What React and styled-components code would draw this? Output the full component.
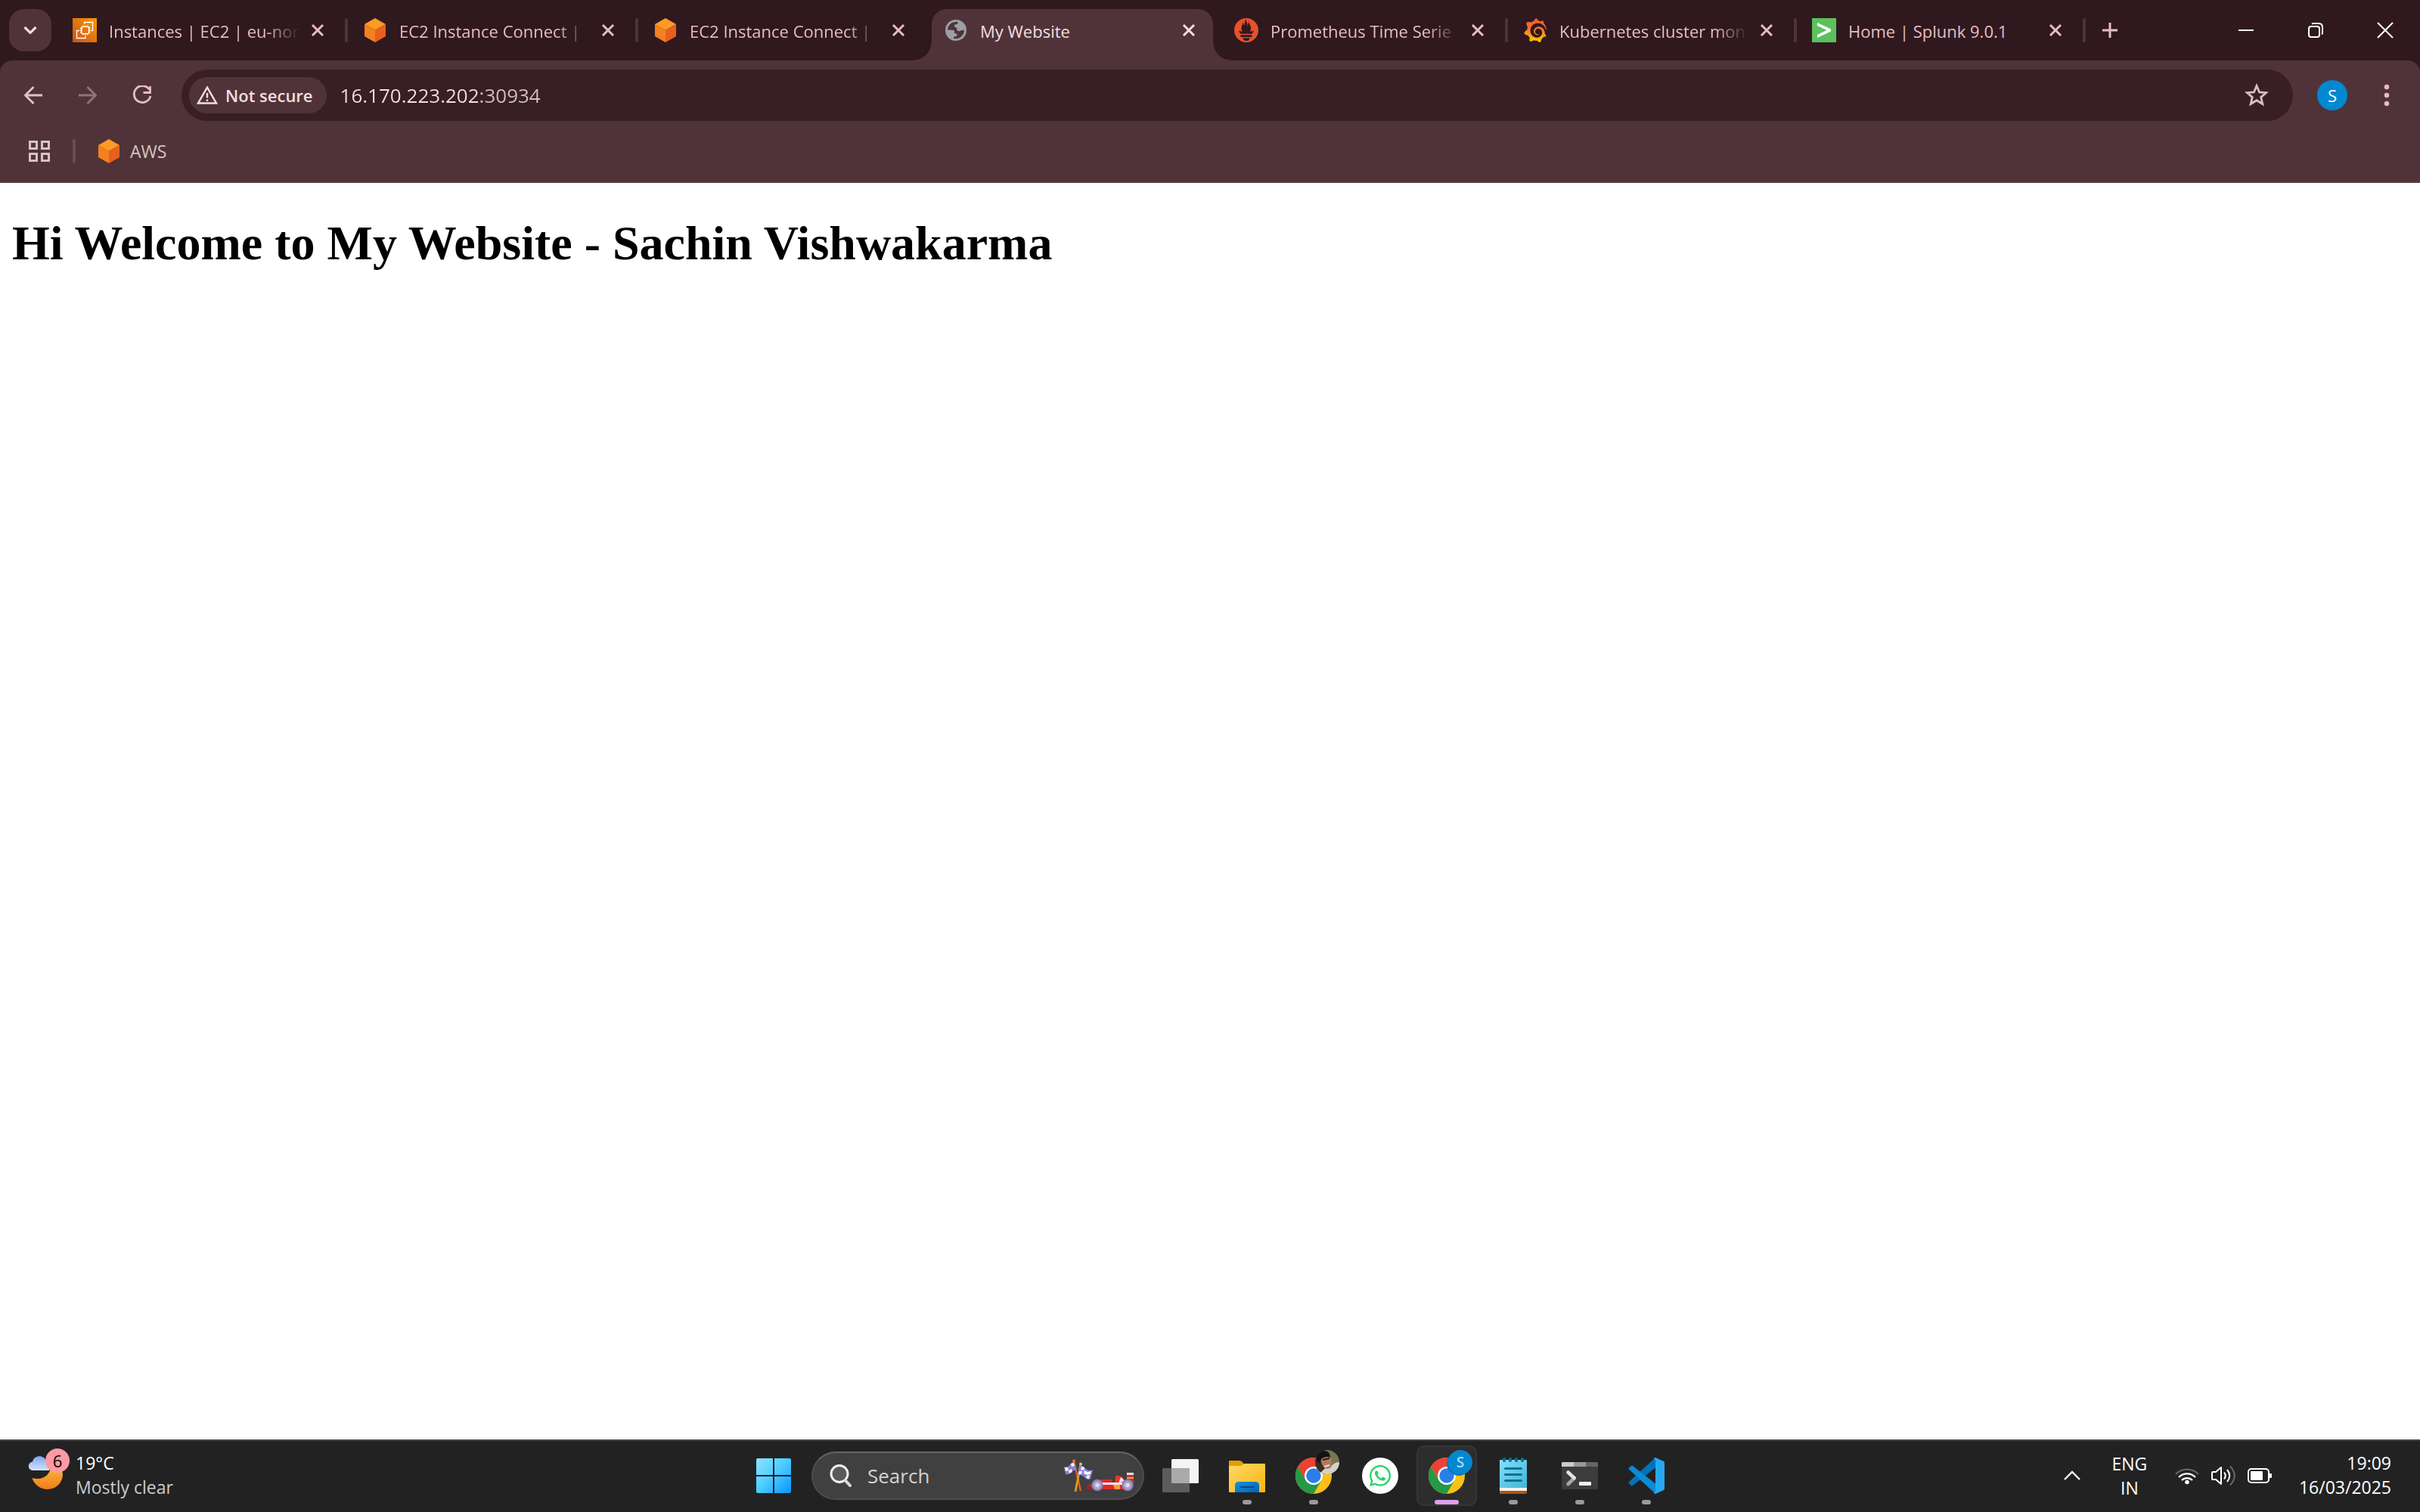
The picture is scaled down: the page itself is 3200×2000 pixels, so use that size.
import React from "react";
import styled, { createGlobalStyle, css } from "styled-components";
import { FaWhatsapp } from "react-icons/fa";
import { SiPrometheus, SiGrafana } from "react-icons/si";

const ui = `"Open Sans", "Noto Sans", sans-serif`;

const c = {
  frame: "#2f191e",
  toolbar: "#503338",
  field: "#381f23",
  pink: "#e7bdc3",
  light: "#f0dfe1",
  dim: "#d4c3c6",
  line: "#544243",
  taskbar: "#222222",
};

const Global = createGlobalStyle`
  *, *::before, *::after { box-sizing: border-box; }
  body { margin: 0; background: #fff; font-family: ${ui}; }
  svg { display: block; flex: none; }
`;

const plain = css`
  border: 0;
  margin: 0;
  padding: 0;
  background: transparent;
  color: inherit;
  font: inherit;
  display: flex;
  align-items: center;
  justify-content: center;
  cursor: pointer;
`;

const Screen = styled.div`
  min-height: 100vh;
  display: flex;
  flex-direction: column;
`;

const Chrome = styled.header`
  background: ${c.frame};
`;

/* ---------- tab strip ---------- */

const Strip = styled.div`
  display: flex;
  align-items: flex-start;
  height: 80px;
  padding: 12px 0 0 12px;
  color: ${c.pink};
`;

const TabSearch = styled.button`
  ${plain}
  flex: none;
  width: 56px;
  height: 56px;
  margin-right: 12px;
  border-radius: 20px;
  background: ${c.toolbar};
  color: ${c.light};
`;

const TabList = styled.div`
  display: flex;
  min-width: 0;
`;

const TabBox = styled.div`
  position: relative;
  flex: 0 1 auto;
  width: ${(p) => p.$size}px;
  min-width: 0;
  height: ${(p) => (p.$active ? 68 : 56)}px;
  padding: 0 12px ${(p) => (p.$active ? 12 : 0)}px 16px;
  display: flex;
  align-items: center;
  border-radius: 20px 20px 0 0;
  background: ${(p) => (p.$active ? c.toolbar : "transparent")};
  color: ${(p) => (p.$active ? c.light : c.pink)};

  ${(p) =>
    p.$active &&
    css`
      &::before,
      &::after {
        content: "";
        position: absolute;
        bottom: 0;
        width: 24px;
        height: 24px;
      }
      &::before {
        right: 100%;
        background: radial-gradient(circle at 0 0, transparent 23px, ${c.toolbar} 24px);
      }
      &::after {
        left: 100%;
        background: radial-gradient(circle at 100% 0, transparent 23px, ${c.toolbar} 24px);
      }
    `}
`;

const TabTitle = styled.button`
  ${plain}
  flex: 1;
  min-width: 0;
  gap: 16px;
  justify-content: flex-start;
  color: inherit;
`;

const TabText = styled.span`
  flex: 1;
  min-width: 0;
  padding-top: 2px;
  overflow: hidden;
  white-space: nowrap;
  text-align: left;
  font-size: 22px;
  line-height: 32px;
  ${(p) =>
    p.$faded &&
    css`
      mask-image: linear-gradient(90deg, #000 calc(100% - 44px), transparent);
    `}
`;

const TabClose = styled.button`
  ${plain}
  flex: none;
  width: 40px;
  height: 40px;
  margin-left: 4px;
`;

const TabGap = styled.span`
  flex: none;
  width: 4px;
  height: 32px;
  margin: 12px 4px;
  border-radius: 2px;
  background: ${(p) => (p.$hidden ? "transparent" : c.toolbar)};
`;

const NewTab = styled.button`
  ${plain}
  flex: none;
  width: 56px;
  height: 56px;
`;

const WindowButtons = styled.div`
  display: flex;
  margin-left: auto;
  color: #fff;
`;

const WindowButton = styled.button`
  ${plain}
  width: 92px;
  height: 56px;
`;

/* ---------- toolbar ---------- */

const Toolbar = styled.div`
  padding-top: 12px;
  border-radius: 16px 16px 0 0;
  border-bottom: 2px solid ${c.line};
  background: ${c.toolbar};
  color: ${c.pink};
`;

const NavRow = styled.div`
  display: flex;
  align-items: center;
  gap: 16px;
  padding: 0 16px;
`;

const IconButton = styled.button`
  ${plain}
  flex: none;
  width: 56px;
  height: 56px;
  opacity: ${(p) => (p.disabled ? 0.45 : 1)};
`;

const AddressBar = styled.div`
  flex: 1;
  display: flex;
  align-items: center;
  height: 68px;
  margin: 0 8px;
  padding: 0 20px 0 10px;
  border-radius: 34px;
  background: ${c.field};
  color: ${c.dim};
`;

const SecurityChip = styled.button`
  ${plain}
  height: 48px;
  padding: 0 18px 0 10px;
  gap: 10px;
  border-radius: 24px;
  background: ${c.toolbar};
  color: ${c.light};
  font-size: 22px;
  font-weight: 600;
  white-space: nowrap;
`;

const UrlInput = styled.input`
  flex: 1;
  min-width: 0;
  height: 48px;
  margin-left: 18px;
  padding: 0;
  border: 0;
  outline: 0;
  color: ${c.light};
  font-family: ${ui};
  font-size: 26px;
  background: linear-gradient(90deg, ${c.light} 184px, #cfc0c2 184px);
  background-clip: text;
  -webkit-text-fill-color: transparent;
`;

const Avatar = styled.span`
  display: grid;
  place-items: center;
  width: 40px;
  height: 40px;
  border-radius: 50%;
  background: #0288d1;
  color: #fff;
  font-size: 22px;
`;

const Bookmarks = styled.nav`
  display: flex;
  align-items: center;
  height: 80px;
  padding: 0 24px;
  color: ${c.dim};
`;

const BookmarkRule = styled.span`
  width: 4px;
  height: 32px;
  margin: 0 28px 0 16px;
  border-radius: 2px;
  background: #6d4b51;
`;

const Bookmark = styled.a`
  display: flex;
  align-items: center;
  gap: 12px;
  color: inherit;
  font-size: 23px;
  line-height: 32px;
  text-decoration: none;
`;

/* ---------- page ---------- */

const Page = styled.main`
  flex: 1;
  padding: 0 16px;
  background: #fff;
  color: #000;
`;

const Heading = styled.h1`
  margin: 43px 0;
  font-family: "Liberation Serif", "Times New Roman", serif;
  font-size: 64px;
  font-weight: 700;
  line-height: 74px;
`;

/* ---------- taskbar ---------- */

const Taskbar = styled.footer`
  display: grid;
  grid-template-columns: 1fr auto 1fr;
  align-items: center;
  height: 96px;
  background: ${c.taskbar};
  box-shadow: inset 0 2px #444;
  color: #fff;
  font-size: 23px;
  line-height: 32px;
`;

const Weather = styled.button`
  ${plain}
  justify-self: start;
  gap: 8px;
  padding-left: 36px;
  text-align: left;
`;

const WeatherIcon = styled.span`
  position: relative;
`;

const Badge = styled.span`
  position: absolute;
  top: 0;
  right: 0;
  display: grid;
  place-items: center;
  width: 32px;
  height: 32px;
  border-radius: 50%;
  background: #ff99a4;
  color: #000;
  font-size: 22px;
`;

const Lines = styled.span`
  display: grid;
  padding-bottom: ${(p) => (p.$raised ? 2 : 0)}px;
`;

const Muted = styled.span`
  color: #ccc;
`;

const Dock = styled.div`
  display: flex;
  align-items: center;
  gap: 8px;
`;

const DockButton = styled.button`
  ${plain}
  position: relative;
  width: 80px;
  height: 80px;
  border-radius: 10px;
  background: ${(p) => (p.$active ? "#2d2d2d" : "transparent")};
  box-shadow: ${(p) => (p.$active ? "inset 0 0 0 2px #363636" : "none")};

  ${(p) =>
    p.$running &&
    css`
      &::after {
        content: "";
        position: absolute;
        bottom: 2px;
        left: 50%;
        width: ${p.$active ? 32 : 12}px;
        height: 6px;
        border-radius: 3px;
        background: ${p.$active ? "#df9fea" : "#9a9a9a"};
        transform: translateX(-50%);
      }
    `}
`;

const SearchBox = styled.label`
  display: flex;
  align-items: center;
  gap: 20px;
  width: 440px;
  height: 64px;
  margin-left: 2px;
  padding: 0 10px 0 22px;
  border: 2px solid #4d4d4d;
  border-top-color: #666;
  border-radius: 32px;
  background: #404040;
`;

const SearchInput = styled.input`
  flex: 1;
  min-width: 0;
  padding: 0;
  border: 0;
  outline: 0;
  background: transparent;
  color: #fff;
  font-family: ${ui};
  font-size: 26px;
  &::placeholder {
    color: #d2d2d2;
    opacity: 1;
  }
`;

const Tray = styled.div`
  display: flex;
  align-items: center;
  justify-self: end;
  gap: 4px;
  padding-right: 22px;
`;

const TrayButton = styled.button`
  ${plain}
  min-width: ${(p) => p.$width}px;
  height: 80px;
  padding: 0 ${(p) => (p.$end ? 16 : 0)}px;
  gap: 16px;
  justify-content: ${(p) => (p.$end ? "flex-end" : "center")};
  text-align: ${(p) => (p.$end ? "right" : "center")};
`;

/* ---------- drawings ---------- */

const Cube = () => (
  <svg width="32" height="32" viewBox="0 0 32 32">
    <path d="M16 0 30 8 16 16 2 8Z" fill="#ff9a27" />
    <path d="M2 8 16 16V32L2 24Z" fill="#f58021" />
    <path d="M30 8 16 16V32L30 24Z" fill="#e85f1e" />
  </svg>
);

const Ec2 = () => (
  <svg width="32" height="32" viewBox="0 0 32 32">
    <defs>
      <linearGradient id="ec2" x1="0" y1="1" x2="1" y2="0">
        <stop offset="0" stopColor="#c8511b" />
        <stop offset="1" stopColor="#ff9900" />
      </linearGradient>
    </defs>
    <rect width="32" height="32" fill="url(#ec2)" />
    <g fill="none" stroke="#fff" strokeWidth="1.3">
      <rect x="12" y="11.500" width="9.500" height="9" />
      <path d="M14 11.500V9.500M16.700 11.500V9.500M19.500 11.500V9.500M14 22.500v-2M16.700 22.500v-2M19.500 22.500v-2M12 13.500h-2M12 16h-2M12 18.500h-2M21.500 13.500h2M21.500 16h2M21.500 18.500h2" />
      <path d="M15.500 8V5.500H26.500V16.500H24.500M9 16.500H5.500V26.500H17V23.500" />
    </g>
  </svg>
);

const Globe = () => (
  <svg width="32" height="32" viewBox="-2 -2 32 32">
    <circle cx="14" cy="14" r="14" fill="#9aa0a6" />
    <path
      d="M3 13.500C3.200 8 7.500 3.300 13 2.900Q16 2.700 16.500 3.200V5.200Q16 6.300 13.500 6.300Q12 6.500 12 8V9.500Q14.800 9.800 15.300 11.500V13.500Q16.500 15.800 18.800 15.200Q21 13.500 25 13.800C25 19 21 25 13.500 25.200Q11.300 25.200 11 24.600V22.600H13.200Q15.300 22.300 15.500 20V18.500H13.200Q12 18.300 12 16.500V14.800Q11.500 13.700 9.500 13.700Z"
      fill={c.toolbar}
    />
  </svg>
);

const Prometheus = () => <SiPrometheus size={32} color="#e6522c" />;

const GradientHolder = styled.svg`
  position: absolute;
`;

const Grafana = () => (
  <>
    <GradientHolder width="0" height="0">
      <defs>
        <linearGradient id="grafana" x1="0" y1="0" x2="0" y2="1">
          <stop offset="0" stopColor="#f05a28" />
          <stop offset="0.4" stopColor="#f4722b" />
          <stop offset="1" stopColor="#fbca0a" />
        </linearGradient>
      </defs>
    </GradientHolder>
    <SiGrafana size={32} fill="url(#grafana)" />
  </>
);

const Splunk = () => (
  <svg width="32" height="32" viewBox="0 0 32 32">
    <rect width="32" height="32" fill="#5cc05c" />
    <path d="M7 6 25 14.500V17.500L7 26V22L19.500 16 7 10Z" fill="#fff" />
  </svg>
);

const Cross = () => (
  <svg width="18" height="18" viewBox="0 0 18 18">
    <path d="M2 2 16 16M16 2 2 16" stroke="currentColor" strokeWidth="3" />
  </svg>
);

const Down = () => (
  <svg width="20" height="12" viewBox="0 0 20 12">
    <path d="M2.500 2 10 9.300 17.500 2" fill="none" stroke="currentColor" strokeWidth="3.200" />
  </svg>
);

const Plus = () => (
  <svg width="20" height="20" viewBox="0 0 20 20">
    <path d="M10 0V20M0 10H20" stroke="currentColor" strokeWidth="3" />
  </svg>
);

const Minimise = () => (
  <svg width="20" height="20" viewBox="0 0 20 20">
    <path d="M0 10H20" stroke="currentColor" strokeWidth="2" />
  </svg>
);

const Restore = () => (
  <svg width="20" height="20" viewBox="0 0 20 20">
    <g fill="none" stroke="currentColor" strokeWidth="2">
      <rect x="1" y="5" width="14" height="14" rx="3" />
      <path d="M5 1.500Q6 1 7 1H14Q19 1 19 6V13Q19 14.500 18.300 15.500" />
    </g>
  </svg>
);

const CloseWindow = () => (
  <svg width="22" height="22" viewBox="0 0 22 22">
    <path d="M1 1 21 21M21 1 1 21" stroke="currentColor" strokeWidth="2" />
  </svg>
);

const Arrow = ({ right }) => (
  <svg width="24" height="24" viewBox="0 0 24 24">
    <path
      d={right ? "M0 12H22M11.500 1 22.500 12 11.500 23" : "M24 12H2M12.500 1 1.500 12 12.500 23"}
      fill="none"
      stroke="currentColor"
      strokeWidth="2.800"
    />
  </svg>
);

const Reload = () => (
  <svg width="26" height="26" viewBox="0 0 26 26">
    <path d="M22.500 5.500A11 11 0 1 0 24 14" fill="none" stroke="currentColor" strokeWidth="2.800" />
    <path d="M23.500 1V9.500H14.500" fill="none" stroke="currentColor" strokeWidth="2.800" />
  </svg>
);

const Warning = () => (
  <svg width="28" height="26" viewBox="0 0 28 26">
    <path d="M14 2.700 26 23.500H2Z" fill="none" stroke="currentColor" strokeWidth="2.400" />
    <path d="M14 10V16.500M14 18.500V21" stroke="currentColor" strokeWidth="2.400" />
  </svg>
);

const Star = () => (
  <svg width="32" height="32" viewBox="0 0 32 32">
    <path
      d="M16 3.500 19.600 12 28.500 12.700 21.700 18.600 23.800 27.500 16 22.700 8.200 27.500 10.300 18.600 3.500 12.700 12.400 12Z"
      fill="none"
      stroke="currentColor"
      strokeWidth="2.800"
    />
  </svg>
);

const Dots = () => (
  <svg width="8" height="30" viewBox="0 0 8 30" fill="currentColor">
    <circle cx="4" cy="4" r="3.200" />
    <circle cx="4" cy="15" r="3.200" />
    <circle cx="4" cy="26" r="3.200" />
  </svg>
);

const Apps = () => (
  <svg width="28" height="28" viewBox="0 0 28 28">
    <path
      d="M1.500 1.500h9v9h-9zM17.500 1.500h9v9h-9zM1.500 17.500h9v9h-9zM17.500 17.500h9v9h-9z"
      fill="none"
      stroke="currentColor"
      strokeWidth="3"
    />
  </svg>
);

const MoonCloud = () => (
  <svg width="56" height="72" viewBox="0 0 56 72">
    <defs>
      <linearGradient id="moon" x1="0" y1="0" x2="0" y2="1">
        <stop offset="0" stopColor="#f5c344" />
        <stop offset="1" stopColor="#f27a1a" />
      </linearGradient>
      <linearGradient id="cloud" x1="0" y1="0" x2="0" y2="1">
        <stop offset="0" stopColor="#7fa8f0" />
        <stop offset="1" stopColor="#d5e3fb" />
      </linearGradient>
    </defs>
    <path d="M6.500 39C20 43 32 35 32 20C40 20 47 27 47 35A20 20 0 0 1 27 54C18 54 9 48 6.500 39Z" fill="url(#moon)" />
    <path d="M8 29C0 29 0 18 7 17.500C9 8 23 8 25 17C34 18 34 29 27 29Z" fill="url(#cloud)" />
  </svg>
);

const Windows = () => (
  <svg width="46" height="46" viewBox="0 0 46 46">
    <defs>
      <linearGradient id="win" gradientUnits="userSpaceOnUse" x1="0" y1="0" x2="46" y2="46">
        <stop offset="0" stopColor="#8fe3ff" />
        <stop offset="0.45" stopColor="#4fd0ff" />
        <stop offset="1" stopColor="#0a95ff" />
      </linearGradient>
    </defs>
    <path
      d="M2 0H22V22H0V2Q0 0 2 0ZM24 0H44Q46 0 46 2V22H24ZM0 24H22V46H2Q0 46 0 44ZM24 24H46V44Q46 46 44 46H24Z"
      fill="url(#win)"
    />
  </svg>
);

const Magnifier = () => (
  <svg width="30" height="32" viewBox="0 0 30 32">
    <circle cx="13" cy="13.500" r="11" fill="#5a5a5a" stroke="#eef1f4" strokeWidth="3" />
    <path d="M21 22.500 27 29" stroke="#d5dce2" strokeWidth="4" strokeLinecap="round" />
  </svg>
);

const Racing = () => (
  <svg width="94" height="44" viewBox="0 0 94 44">
    <path d="M13 3 22 42" stroke="#e25a1c" strokeWidth="2.600" />
    <path d="M22 7 15 43" stroke="#d9a520" strokeWidth="2.600" />
    <circle cx="13" cy="2.500" r="2" fill="#ff6a2a" />
    <circle cx="22" cy="6.500" r="2" fill="#f2c12c" />
    <path d="M13 4 17 15Q12 14 9 18Q6 21 2 20L0 10Q5 12 8 7Q10 4 13 4Z" fill="#8583cf" />
    <path d="M20 9Q25 8 28 12Q32 17 38 14L35 26Q31 29 27 24Q23 20 18 21Z" fill="#8583cf" />
    <path
      d="M9 6 13 5 14 9 10 10ZM1 11 5 11 6 15 2 16ZM6 15 10 13 11 17 7 19ZM23 10 27 11 26 15 22 14ZM27 15 31 17 30 21 26 19ZM31 17 36 16 35 20 30 21ZM20 16 24 16 23 20 19 20ZM30 22 34 21 33 26 29 25Z"
      fill="#f4f3ff"
    />
    <path d="M30 40V36L50 27H62L66 32H86V40Z" fill="#e0282e" />
    <path d="M30 40V36L38 34V40Z" fill="#a51d2c" />
    <path d="M68 22Q76 20 80 29L70 34H67Z" fill="#e8362f" />
    <path d="M75 24Q79 26 80 29L72 32Z" fill="#f1dfe4" />
    <rect x="83" y="18" width="9" height="15" fill="#c9303b" />
    <rect x="83" y="18" width="9" height="3" fill="#e6d5e8" />
    <rect x="83" y="24" width="9" height="2" fill="#f4a52c" />
    <rect x="50" y="31" width="28" height="3" fill="#f8e6ea" />
    <path d="M65 34H74V40H67Z" fill="#f2a52f" />
    {[44, 84].map((x) => (
      <g key={x}>
        <circle cx={x} cy="34.500" r="7.700" fill="#8a83b4" />
        <circle cx={x} cy="34.500" r="5.500" fill="#aaa3cf" />
        <circle cx={x} cy="34.500" r="2.700" fill="#dedcf0" />
      </g>
    ))}
  </svg>
);

const TaskView = () => (
  <svg width="48" height="48" viewBox="0 0 48 48">
    <rect x="12" y="2" width="36" height="32" rx="1.500" fill="#f4f4f4" />
    <rect x="0" y="14" width="36" height="32" rx="1.500" fill="#5c5c5c" />
    <path d="M12 14H34.500Q36 14 36 15.500V34H12Z" fill="#aaaaaa" />
  </svg>
);

const Explorer = () => (
  <svg width="48" height="48" viewBox="0 0 48 48">
    <defs>
      <linearGradient id="folder" x1="0" y1="0" x2="1" y2="1">
        <stop offset="0" stopColor="#ffd968" />
        <stop offset="1" stopColor="#f7b60c" />
      </linearGradient>
      <linearGradient id="pocket" x1="0" y1="0" x2="1" y2="1">
        <stop offset="0" stopColor="#1592e0" />
        <stop offset="1" stopColor="#0560b5" />
      </linearGradient>
    </defs>
    <path d="M0 5Q0 4 1 4H14Q16 4 18 6L20 9V14H0Z" fill="#e0a000" />
    <path d="M0 11H15Q17 11 20 8H47Q48 8 48 9V45Q48 46 47 46H1Q0 46 0 45Z" fill="url(#folder)" />
    <path d="M8 46V37Q8 32 13 32H35Q40 32 40 37V46Z" fill="url(#pocket)" />
    <path d="M15 39H33" stroke="#0a4a86" strokeWidth="2" strokeLinecap="round" />
  </svg>
);

const ChromeBase = () => (
  <>
    <circle cx="24" cy="34" r="24" fill="#fbc116" />
    <path d="M24 34 44.800 22A24 24 0 0 0 3.200 22L13.600 40Z" fill="#ea4335" />
    <path d="M3.200 22A24 24 0 0 0 24 58L34.400 40 24 46 13.600 40Z" fill="#279847" />
    <path d="M24 22H44.800A24 24 0 0 1 48 34L34.400 40Z" fill="#fbc116" />
    <circle cx="24" cy="34" r="12" fill="#fff" />
    <circle cx="24" cy="34" r="9.700" fill="#2b7de9" />
  </>
);

const ChromePhoto = () => (
  <svg width="68" height="68" viewBox="-10 0 68 68">
    <defs>
      <clipPath id="face">
        <circle cx="42" cy="16" r="16" />
      </clipPath>
    </defs>
    <ChromeBase />
    <g clipPath="url(#face)">
      <rect x="26" width="32" height="32" fill="#77764f" />
      <path d="M26 0H38V32H26Z" fill="#3a2c22" />
      <path d="M32 32Q38 22 46 24Q50 16 58 16V32Z" fill="#d3d0cd" />
      <ellipse cx="41" cy="15" rx="7" ry="10" fill="#b07a5e" transform="rotate(-15 41 15)" />
      <path d="M28 14Q26 3 36 1Q46 0 46 10Q40 7 34 12L32 18Z" fill="#17110f" />
      <path d="M36 13 45 11" stroke="#2b1b16" strokeWidth="2" />
      <path d="M38 22 45 20" stroke="#f0dcd2" strokeWidth="2" />
    </g>
  </svg>
);

const ChromeLetter = () => (
  <svg width="68" height="68" viewBox="-10 0 68 68">
    <ChromeBase />
    <circle cx="40" cy="18" r="16" fill="#0b78be" />
    <circle cx="42" cy="16" r="16" fill="#0288d1" />
    <text x="42" y="23" textAnchor="middle" fontFamily={ui} fontSize="19" fontWeight="600" fill="#a9d8f2">
      S
    </text>
  </svg>
);

const WhatsAppDisc = styled.span`
  display: grid;
  place-items: center;
  width: 48px;
  height: 48px;
  border-radius: 50%;
  background: #fff;
  color: #25d366;
`;

const WhatsApp = () => (
  <WhatsAppDisc>
    <FaWhatsapp size={32} />
  </WhatsAppDisc>
);

const Notepad = () => (
  <svg width="36" height="48" viewBox="0 0 36 48">
    <defs>
      <linearGradient id="pad" x1="0" y1="0" x2="1" y2="1">
        <stop offset="0" stopColor="#84e0f8" />
        <stop offset="1" stopColor="#42b4d8" />
      </linearGradient>
    </defs>
    <rect y="42" width="36" height="6" rx="1" fill="#b0560f" />
    <rect y="38" width="36" height="6" fill="#f1f1f1" />
    <path d="M1 3H35Q36 3 36 4V40H0V4Q0 3 1 3Z" fill="url(#pad)" />
    <path d="M6 2V4M14 2V4M22 2V4M30 2V4" stroke="#0c7296" strokeWidth="4" strokeLinecap="round" />
    <path d="M7.500 14.500H28.500M7.500 22.500H28.500M7.500 30.500H28.500" stroke="#0c7296" strokeWidth="3" strokeLinecap="round" />
  </svg>
);

const Terminal = () => (
  <svg width="48" height="36" viewBox="0 0 48 36">
    <path d="M0 6H48V34.500Q48 36 46.500 36H1.500Q0 36 0 34.500Z" fill="#3d3d3d" />
    <path d="M1 0H16V6H0V1Q0 0 1 0Z" fill="#cccccc" />
    <path d="M16 0H32V6H16Z" fill="#999999" />
    <path d="M32 0H47Q48 0 48 1V6H32Z" fill="#666666" />
    <path d="M17 21 8.500 29" stroke="#a6a6a6" strokeWidth="4.500" strokeLinecap="round" />
    <path d="M8.500 13.500 16.500 21" stroke="#e4e4e4" strokeWidth="4.500" strokeLinecap="round" />
    <rect x="23" y="26" width="16" height="5" rx="1" fill="#f0f0f0" />
  </svg>
);

const VsCode = () => (
  <svg width="48" height="48" viewBox="0 0 48 48">
    <path d="M36 0 1 32Q0 33.500 1 34.500L4 37Q5 37.500 6 37L36 13.500Z" fill="#0072b8" />
    <path d="M36 48 1 15.500Q0 14.500 1 13.500L4 11Q5 10.500 6 11L36 34.500Z" fill="#0b8ad8" />
    <path d="M36 0 47 5Q48 5.500 48 7V41Q48 42.500 47 43L36 48Q34.500 48 33.500 46.500Q36 46.500 36 44V4Q36 1.500 33.500 1.500Q34.500 0 36 0Z" fill="#27a9f2" />
  </svg>
);

const Up = () => (
  <svg width="24" height="16" viewBox="0 0 24 16">
    <path d="M2 13 12 3 22 13" fill="none" stroke="#fff" strokeWidth="2.400" />
  </svg>
);

const Wifi = () => (
  <svg width="32" height="32" viewBox="0 0 32 32" fill="none" strokeWidth="2.200">
    <path d="M1 14A21 21 0 0 1 31 14" stroke="#666" />
    <path d="M5 18A15.500 15.500 0 0 1 27 18" stroke="#fff" />
    <path d="M9 22A10 10 0 0 1 23 22" stroke="#fff" />
    <circle cx="16" cy="24.500" r="2.800" fill="#fff" />
  </svg>
);

const Speaker = () => (
  <svg width="32" height="32" viewBox="0 0 32 32" fill="none" strokeWidth="2">
    <path d="M1 12Q1 11 2 11H6L13 5V27L6 21H2Q1 21 1 20Z" stroke="#fff" strokeLinejoin="round" />
    <path d="M17 11.500Q20.500 16 17 20.500M21 8Q27.500 16 21 24" stroke="#fff" />
    <path d="M25 3.500Q36.500 16 25 28.500" stroke="#666" />
  </svg>
);

const Battery = () => (
  <svg width="32" height="32" viewBox="0 0 32 32">
    <rect x="1" y="7" width="27" height="18" rx="4" fill="none" stroke="#fff" strokeWidth="2" />
    <rect x="4" y="10" width="16" height="12" rx="1" fill="#fff" />
    <path d="M29 13H31Q32 13 32 14V18Q32 19 31 19H29Z" fill="#fff" />
  </svg>
);

/* ---------- data ---------- */

const tabs = [
  { title: "Instances | EC2 | eu-nor", Icon: Ec2, size: 372, faded: true },
  { title: "EC2 Instance Connect |", Icon: Cube, size: 372, faded: true },
  { title: "EC2 Instance Connect |", Icon: Cube, size: 372, faded: true },
  { title: "My Website", Icon: Globe, size: 372, active: true },
  { title: "Prometheus Time Serie", Icon: Prometheus, size: 370, faded: true },
  { title: "Kubernetes cluster mon", Icon: Grafana, size: 370, faded: true },
  { title: "Home | Splunk 9.0.1", Icon: Splunk, size: 370 },
];

const apps = [
  { name: "Task view", Icon: TaskView },
  { name: "File Explorer", Icon: Explorer, running: true },
  { name: "Chrome, personal", Icon: ChromePhoto, running: true },
  { name: "WhatsApp", Icon: WhatsApp },
  { name: "Chrome, S", Icon: ChromeLetter, running: true, active: true },
  { name: "Notepad", Icon: Notepad, running: true },
  { name: "Terminal", Icon: Terminal, running: true },
  { name: "Visual Studio Code", Icon: VsCode, running: true },
];

const BrowserTabs = () => (
  <TabList>
    {tabs.map(({ title, Icon, size, active, faded }, i) => (
      <React.Fragment key={i}>
        <TabBox $size={size} $active={active}>
          <TabTitle aria-pressed={!!active}>
            <Icon />
            <TabText $faded={faded}>{title}</TabText>
          </TabTitle>
          <TabClose aria-label="Close tab">
            <Cross />
          </TabClose>
        </TabBox>
        <TabGap $hidden={active || tabs[i + 1]?.active} />
      </React.Fragment>
    ))}
  </TabList>
);

export default function App() {
  return (
    <Screen>
      <Global />
      <Chrome>
        <Strip>
          <TabSearch aria-label="Search tabs">
            <Down />
          </TabSearch>
          <BrowserTabs />
          <NewTab aria-label="New tab">
            <Plus />
          </NewTab>
          <WindowButtons>
            <WindowButton aria-label="Minimise">
              <Minimise />
            </WindowButton>
            <WindowButton aria-label="Restore">
              <Restore />
            </WindowButton>
            <WindowButton aria-label="Close">
              <CloseWindow />
            </WindowButton>
          </WindowButtons>
        </Strip>
        <Toolbar>
          <NavRow>
            <IconButton aria-label="Back">
              <Arrow />
            </IconButton>
            <IconButton aria-label="Forward" disabled>
              <Arrow right />
            </IconButton>
            <IconButton aria-label="Reload">
              <Reload />
            </IconButton>
            <AddressBar>
              <SecurityChip>
                <Warning />
                Not secure
              </SecurityChip>
              <UrlInput type="text" aria-label="Address" defaultValue="16.170.223.202:30934" />
              <IconButton aria-label="Bookmark this page">
                <Star />
              </IconButton>
            </AddressBar>
            <IconButton aria-label="Profile">
              <Avatar>S</Avatar>
            </IconButton>
            <IconButton aria-label="Menu">
              <Dots />
            </IconButton>
          </NavRow>
          <Bookmarks>
            <IconButton aria-label="Apps">
              <Apps />
            </IconButton>
            <BookmarkRule />
            <Bookmark href="#aws">
              <Cube />
              AWS
            </Bookmark>
          </Bookmarks>
        </Toolbar>
      </Chrome>
      <Page>
        <Heading>Hi Welcome to My Website - Sachin Vishwakarma</Heading>
      </Page>
      <Taskbar>
        <Weather>
          <WeatherIcon>
            <MoonCloud />
            <Badge>6</Badge>
          </WeatherIcon>
          <Lines $raised>
            <span>19°C</span>
            <Muted>Mostly clear</Muted>
          </Lines>
        </Weather>
        <Dock>
          <DockButton aria-label="Start">
            <Windows />
          </DockButton>
          <SearchBox>
            <Magnifier />
            <SearchInput type="text" aria-label="Search" placeholder="Search" />
            <Racing />
          </SearchBox>
          {apps.map(({ name, Icon, running, active }) => (
            <DockButton key={name} aria-label={name} $running={running} $active={active}>
              <Icon />
            </DockButton>
          ))}
        </Dock>
        <Tray>
          <TrayButton $width={64} aria-label="Show hidden icons">
            <Up />
          </TrayButton>
          <TrayButton $width={80}>
            <Lines>
              <span>ENG</span>
              <span>IN</span>
            </Lines>
          </TrayButton>
          <TrayButton $width={160} aria-label="Network, sound, battery">
            <Wifi />
            <Speaker />
            <Battery />
          </TrayButton>
          <TrayButton $width={154} $end>
            <Lines $raised>
              <span>19:09</span>
              <span>16/03/2025</span>
            </Lines>
          </TrayButton>
        </Tray>
      </Taskbar>
    </Screen>
  );
}
